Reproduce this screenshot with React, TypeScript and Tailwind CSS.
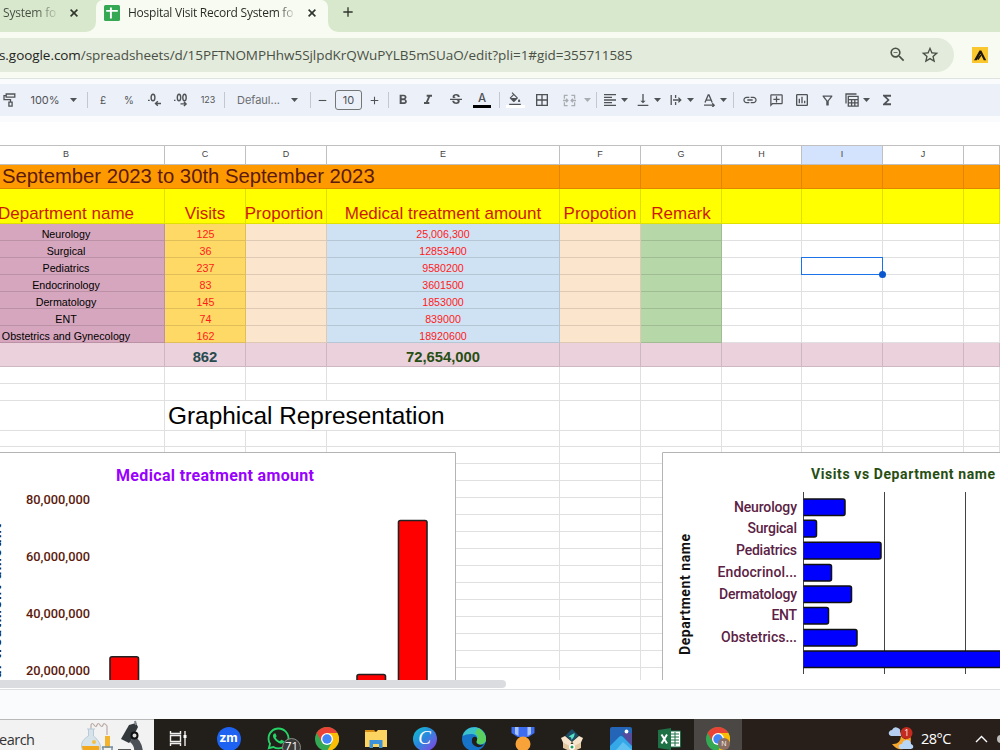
import type { ReactNode } from 'react';
import clsx from 'clsx';
import { FaWhatsapp } from 'react-icons/fa';
import {
  MdAdd,
  MdBorderAll,
  MdFormatAlignLeft,
  MdFormatBold,
  MdFormatColorFill,
  MdFormatItalic,
  MdFunctions,
  MdInsertLink,
  MdOutlineAddComment,
  MdOutlineFilterAlt,
  MdOutlineInsertChart,
  MdRemove,
  MdStarOutline,
  MdStrikethroughS,
  MdVerticalAlignBottom,
  MdZoomOut,
} from 'react-icons/md';

const departments = [
  { name: 'Neurology', visits: '125', amount: '25,006,300' },
  { name: 'Surgical', visits: '36', amount: '12853400' },
  { name: 'Pediatrics', visits: '237', amount: '9580200' },
  { name: 'Endocrinology', visits: '83', amount: '3601500' },
  { name: 'Dermatology', visits: '145', amount: '1853000' },
  { name: 'ENT', visits: '74', amount: '839000' },
  { name: 'Obstetrics and Gynecology', visits: '162', amount: '18920600' },
];

const columns = ['B', 'C', 'D', 'E', 'F', 'G', 'H', 'I', 'J', ''];

const visitBars = [
  { label: 'Neurology', x: 734, y: 499, end: 845 },
  { label: 'Surgical', x: 747.5, y: 520.3, end: 816.5 },
  { label: 'Pediatrics', x: 736, y: 542.3, end: 881 },
  { label: 'Endocrinol...', x: 717.5, y: 564.4, end: 831.5 },
  { label: 'Dermatology', x: 719, y: 586, end: 851.5 },
  { label: 'ENT', x: 771.5, y: 607.5, end: 828.5 },
  { label: 'Obstetrics...', x: 721, y: 629.5, end: 857 },
  { label: '', x: 0, y: 651, end: 1040 },
];

/* ---------- browser ---------- */

function CloseIcon({ className }: { className: string }) {
  return (
    <svg width="8" height="8" viewBox="0 0 8 8" className={clsx('shrink-0', className)} stroke="currentColor" strokeWidth="1.6">
      <path d="m.6.6 6.8 6.8M7.400.6.6 7.400" />
    </svg>
  );
}

function TabStrip() {
  return (
    <div className="flex h-8 bg-[#f8fbf2] text-[12px] text-[#30352d]">
      <div className="flex w-24 items-center rounded-br-[10px] bg-[#d8e8cd] pb-[7px] pl-[3px]">
        <span className="w-[54px] overflow-hidden whitespace-nowrap bg-linear-to-r from-[#454b40] from-60% to-[#c4d2bb] bg-clip-text tracking-[-0.2px] text-transparent">
          System fo
        </span>
        <CloseIcon className="ml-[13px]" />
      </div>
      <div className="w-[232px] bg-[#d8e8cd]">
        <div className="flex h-8 items-center rounded-t-[7px] bg-[#f8fbf2] pb-[7px] pl-2">
          <svg width="16" height="16" viewBox="0 0 16 16" className="shrink-0">
            <rect width="16" height="16" rx="1.5" fill="#34a853" />
            <path d="M2.2 5.9h11.6M6.9 2.6v10.8" stroke="#fff" strokeWidth="1.9" />
          </svg>
          <span className="ml-2 w-[166px] overflow-hidden whitespace-nowrap bg-linear-to-r from-[#252a22] from-90% to-[#dce0d6] bg-clip-text tracking-[-0.25px] text-transparent">
            Hospital Visit Record System fo
          </span>
          <CloseIcon className="ml-[14px]" />
        </div>
      </div>
      <div className="flex-1 rounded-bl-[10px] bg-[#d8e8cd] pt-1 pl-3">
        <MdAdd size={16} />
      </div>
    </div>
  );
}

function AddressBar() {
  return (
    <div className="flex h-[47px] items-center border-b border-[#dfe3e0] bg-[#f8fbf2] pt-px pb-[2px]">
      <div className="flex h-[34px] w-[954px] items-center rounded-r-full bg-[#e3ebdc] text-[#4a5046]">
        <span className="-ml-px w-[889px] whitespace-nowrap pt-px text-[13.5px] tracking-[-0.06px]">
          <span className="text-[#1f241c]">s.google.com</span>
          /spreadsheets/d/15PFTNOMPHhw5SjlpdKrQWuPYLB5mSUaO/edit?pli=1#gid=355711585
        </span>
        <MdZoomOut size={19} />
        <MdStarOutline size={20} className="ml-[13px]" />
      </div>
      <svg width="16" height="16" viewBox="0 0 16 16" className="ml-[18px]">
        <rect width="16" height="16" fill="#fbc72f" />
        <path d="M2 13.3 7.5 3.5h1.8l4.9 9.8h-2.4L8.5 6.8l-3.7 6.500z" fill="#1c1608" />
        <path d="m5.8 12.5 3.2-4.5" stroke="#1c1608" strokeWidth="1.5" />
      </svg>
    </div>
  );
}

/* ---------- sheet toolbar ---------- */

function Slot({ className, children }: { className: string; children?: ReactNode }) {
  return <div className={clsx('flex h-5 shrink-0 items-center justify-center whitespace-nowrap', className)}>{children}</div>;
}

function Caret({ className = 'w-[9px]' }: { className?: string }) {
  return (
    <Slot className={className}>
      <svg width="7" height="4" viewBox="0 0 7 4" className="shrink-0 fill-current">
        <path d="M0 0h7L3.5 4z" />
      </svg>
    </Slot>
  );
}

function Divider({ className = 'w-2' }: { className?: string }) {
  return (
    <Slot className={className}>
      <div className="h-4 w-px bg-[#c3c8d0]" />
    </Slot>
  );
}

function Toolbar() {
  return (
    <div className="bg-[#f9fbfd] pt-[5px] pb-[6px]">
      <div className="flex h-8 items-center bg-[#ecf0f9] font-['Inter',sans-serif] text-[11px] text-[#505356]">
        <Slot className="w-[18px]">
          <svg width="13" height="14" viewBox="0 0 13 14" fill="none" stroke="currentColor" strokeWidth="1.3">
            <path d="M3.2 1h8.6v3.2H3.2zM3.2 2.6H1v4h6.500v2.6M5.9 9.2h3.2v4H5.9z" />
          </svg>
        </Slot>
        <Slot className="ml-[6px] w-[42px]">100%</Slot>
        <Caret className="w-[14px]" />
        <Divider className="w-[14px]" />
        <Slot className="w-[18px] text-[10px]">£</Slot>
        <Slot className="w-[34px] text-[10px]">%</Slot>
        <Slot className="w-[18px]">
          <svg width="16" height="14" viewBox="0 0 16 14" fill="none" stroke="currentColor" strokeWidth="1.4">
            <ellipse cx="6" cy="4.5" rx="1.9" ry="3.3" />
            <path d="M1 7.4h1.7M14 10.5H8.5m2.3-2.2-2.3 2.2 2.3 2.2" />
          </svg>
        </Slot>
        <Slot className="w-[34px]">
          <svg width="16" height="14" viewBox="0 0 16 14" fill="none" stroke="currentColor" strokeWidth="1.4">
            <ellipse cx="6" cy="4.5" rx="1.7" ry="3.3" />
            <ellipse cx="11.5" cy="4.5" rx="1.7" ry="3.3" />
            <path d="M1 7.4h1.5M7.5 10.9h5.6m-2.2-2.1 2.2 2.1-2.2 2.1" />
          </svg>
        </Slot>
        <Slot className="w-5 text-[9px]">123</Slot>
        <Divider className="w-3" />
        <Slot className="w-[57px] text-[#6a6d70]">Defaul...</Slot>
        <Caret className="w-[14px]" />
        <Divider className="ml-[5px] w-2" />
        <Slot className="w-4"><MdRemove size={13} /></Slot>
        <Slot className="ml-[5px] w-[27px] rounded-[3px] border border-[#747775]">10</Slot>
        <Slot className="ml-1 w-4"><MdAdd size={13} /></Slot>
        <Divider className="ml-[2px] w-2" />
        <Slot className="w-[22px]"><MdFormatBold size={16} /></Slot>
        <Slot className="w-7"><MdFormatItalic size={16} /></Slot>
        <Slot className="w-[27px]"><MdStrikethroughS size={16} /></Slot>
        <Slot className="w-[26px] flex-col">
          <span className="text-[11.5px] leading-[13px] font-medium">A</span>
          <div className="h-[3px] w-[18px] shrink-0 bg-black" />
        </Slot>
        <Divider />
        <Slot className="w-6 flex-col pb-px">
          <MdFormatColorFill size={14} viewBox="0 0 24 20" className="shrink-0" />
          <div className="h-[3px] w-[19px] shrink-0 bg-white" />
        </Slot>
        <Slot className="w-[30px]"><MdBorderAll size={16} /></Slot>
        <Slot className="w-6 text-[#a9acb1]">
          <svg width="13" height="13" viewBox="0 0 14 14" fill="none" stroke="currentColor" strokeWidth="1.4">
            <path d="M5 1.5H1.5V5M9 1.5h3.5V5M5 12.5H1.5V9M9 12.5h3.5V9M0 7h5M3.4 5.2 5.2 7 3.4 8.8M14 7H9m1.6-1.8L8.8 7l1.8 1.8" />
          </svg>
        </Slot>
        <Caret className="w-3 text-[#a9acb1]" />
        <Divider className="w-[6px]" />
        <Slot className="ml-px w-5"><MdFormatAlignLeft size={16} /></Slot>
        <Caret />
        <Slot className="ml-1 w-5"><MdVerticalAlignBottom size={16} /></Slot>
        <Caret />
        <Slot className="ml-1 w-5">
          <svg width="12" height="12" viewBox="0 0 12 12" fill="none" stroke="currentColor" strokeWidth="1.3">
            <path d="M1.2 1v10M5.6 1v3M5.6 8v3M3 6h7.5M8.4 3.6 10.8 6 8.4 8.4" />
          </svg>
        </Slot>
        <Caret />
        <Slot className="ml-1 w-5">
          <svg width="13" height="13" viewBox="0 0 13 13" fill="none" stroke="currentColor" strokeWidth="1.3">
            <path d="M2 8.6 5.2 1h.8l3.2 7.6M3.2 6.2H8M1 11.2h10M9.2 9.2l2 2-2 2" />
          </svg>
        </Slot>
        <Caret />
        <Divider className="w-[10px]" />
        <Slot className="w-6"><MdInsertLink size={16} /></Slot>
        <Slot className="w-7"><MdOutlineAddComment size={15} className="-scale-x-100" /></Slot>
        <Slot className="w-6"><MdOutlineInsertChart size={16} /></Slot>
        <Slot className="w-[27px]"><MdOutlineFilterAlt size={15} /></Slot>
        <Slot className="w-[21px]">
          <svg width="14" height="14" viewBox="0 0 14 14" fill="none" stroke="currentColor" strokeWidth="1.3">
            <path d="M1 10.5V1h10.5M3.3 3.4h9.8v9.7H3.3zM3.3 6.6h9.8M3.3 9.8h9.8M6.6 6.6v6.5M9.8 6.6v6.5" />
          </svg>
        </Slot>
        <Caret className="w-2" />
        <Slot className="ml-1 w-[26px]"><MdFunctions size={16} /></Slot>
      </div>
    </div>
  );
}

/* ---------- sheet ---------- */

type RowProps = { height: string; fills?: string[]; open?: number[]; line?: string; cells?: ReactNode[]; text?: string };

// `open` lists the cells that lose their right edge because text runs across it
function Row({ height, fills = [], open = [], line = 'border-black/12', cells = [], text = '' }: RowProps) {
  return (
    <div className={clsx('-ml-8 grid w-[1032px] grid-cols-[197px_81px_81px_233px_81px_81px_80px_81px_81px_36px]', height, text)}>
      {columns.map((c, i) => (
        <div
          key={c}
          className={clsx(
            'relative flex min-w-0 items-end justify-center border-b whitespace-nowrap',
            line,
            !open.includes(i) && 'border-r',
            fills[i],
          )}
        >
          {cells[i]}
        </div>
      ))}
    </div>
  );
}

const orange = Array(10).fill('bg-[#ff9900]');
const yellow = Array(10).fill('bg-[#ffff00]');
const pink = Array(10).fill('bg-[#ead1dc]');
const dataFills = ['bg-[#d5a6bd]', 'bg-[#ffd966]', 'bg-[#fce5cd]', 'bg-[#cfe2f3]', 'bg-[#fce5cd]', 'bg-[#b6d7a8]'];

function Selection() {
  return (
    <div className="absolute -top-px -right-px -bottom-px -left-px z-10 border border-[#1a73e8]">
      <div className="absolute -right-[4px] -bottom-[4px] size-[7px] rounded-full bg-[#0b57d0]" />
    </div>
  );
}

function AmountChart() {
  return (
    <svg width="456" height="229" viewBox="0 452 456 229" className="absolute top-[306px] left-0 font-['Roboto',sans-serif]">
      <path d="M-1 452.5H455.5V690" fill="#fff" stroke="#b4b4b4" />
      <path d="M0 453h455v240H0z" fill="#fff" />
      <text x="116" y="481" fontSize="16" fontWeight="700" fill="#9900ff" textLength="198">Medical treatment amount</text>
      {['80,000,000', '60,000,000', '40,000,000', '20,000,000'].map((label, i) => (
        <text key={label} x="26" y={504 + i * 57.1} fontSize="13.5" fontWeight="500" fill="#5b1a0c" textLength="64" lengthAdjust="spacingAndGlyphs">{label}</text>
      ))}
      <text transform="translate(1.3 724) rotate(-90)" fontSize="14" fontWeight="700" fill="#222" textLength="200">Medical treatment amount</text>
      {[[110, 656.8], [357, 674.5], [398.5, 520.5]].map(([x, y]) => (
        <rect key={x} x={x} y={y} width="28.5" height="190" rx="2" fill="#ff0000" stroke="#222" strokeWidth="1.6" />
      ))}
    </svg>
  );
}

function VisitsChart() {
  return (
    <svg width="338" height="229" viewBox="662 452 338 229" className="absolute top-[306px] left-[662px] font-['Roboto',sans-serif]">
      <path d="M662.5 690V452.5H1010V690" fill="#fff" stroke="#b4b4b4" />
      <text x="811" y="479" fontSize="14" fontWeight="700" fill="#274e13" textLength="184">Visits vs Department name</text>
      <text transform="translate(689.5 655) rotate(-90)" fontSize="14" fontWeight="700" fill="#111" textLength="121">Department name</text>
      <path d="M803.5 492v182M884.5 492v182M965.5 492v182" stroke="#444" />
      {visitBars.map((bar) => (
        <g key={bar.y}>
          {bar.label && (
            <text x={bar.x} y={bar.y + 12.6} fontSize="14" fontWeight="500" fill="#5b2245" textLength={797 - bar.x}>{bar.label}</text>
          )}
          <path
            d={`M803.5 ${bar.y}H${bar.end - 2}q2 0 2 2v12.6q0 2 -2 2H803.5`}
            fill="#0000ff"
            stroke="#111"
            strokeWidth="1.5"
          />
        </g>
      ))}
    </svg>
  );
}

function Sheet() {
  return (
    <div className="relative mt-[23px] h-[535px] overflow-hidden border-t border-[#c0c0c0] bg-white font-['Liberation_Sans',Arial,sans-serif]">
      <Row
        height="h-[19px]"
        line="border-[#c0c0c0]"
        text="text-[9px] text-[#444]"
        fills={['', '', '', '', '', '', '', 'bg-[#d3e3fd]']}
        cells={columns.map((c) => <span key={c} className="self-center">{c}</span>)}
      />
      <Row
        height="h-6"
        fills={orange}
        open={[0, 1, 2]}
        cells={[<span key="t" className="absolute top-0 left-[34px] z-10 text-[20.25px] leading-[23px] text-[#5b1a0c]">September 2023 to 30th September 2023</span>]}
      />
      <Row
        height="h-[35px]"
        fills={yellow}
        text="text-[17px] leading-[18px] text-[#cc1a00]"
        cells={['Department name', 'Visits', <span key="p" className="mr-1">Proportion</span>, 'Medical treatment amount', 'Propotion', 'Remark']}
      />
      {departments.map((d, i) => (
        <Row
          key={d.name}
          height="h-[17px]"
          fills={dataFills}
          text="text-[10.7px] leading-[11px] text-[#ff1a1a]"
          cells={[
            <span key="n" className="text-black">{d.name}</span>,
            <span key="v" className="pl-px">{d.visits}</span>,
            '',
            d.amount,
            '',
            '',
            '',
            i === 2 && <Selection />,
          ]}
        />
      ))}
      <Row
        height="h-6"
        fills={pink}
        text="text-[14.8px] leading-[17px] font-bold"
        cells={['', <span key="v" className="text-[#274b4e]">862</span>, '', <span key="a" className="text-[#274e13]">72,654,000</span>]}
      />
      <Row height="h-[17px]" />
      <Row height="h-[17px]" />
      <Row
        height="h-[30px]"
        open={[1, 2]}
        cells={['', <span key="g" className="absolute bottom-0 left-[3px] z-10 text-[24.4px] leading-[28px] text-black">Graphical Representation</span>]}
      />
      <Row height="h-4" />
      {Array.from({ length: 14 }, (_, i) => <Row key={i} height="h-[17px]" />)}
      <AmountChart />
      <VisitsChart />
    </div>
  );
}

/* ---------- taskbar ---------- */

function ChromeIcon() {
  return (
    <svg width="24" height="24" viewBox="0 0 24 24">
      <circle cx="12" cy="12" r="12" fill="#34a853" />
      <path d="M1.6 6A12 12 0 0 1 22.4 6H12L7 15z" fill="#ea4335" />
      <path d="M22.4 6A12 12 0 0 1 12 24l5.2-9L12 6z" fill="#fbbc05" />
      <circle cx="12" cy="12" r="6" fill="#fff" />
      <circle cx="12" cy="12" r="4.7" fill="#4285f4" />
    </svg>
  );
}

function SearchArt() {
  return (
    <svg width="64" height="31" viewBox="81 719 64 31">
      <path d="M91 728v-4q1-3 3 0t3 0 3 0 3 0 4 1v9" fill="none" stroke="#bba9a7" strokeWidth="1.2" />
      <path d="M87 728h8M88.5 728v7c-5 3-7 6-7 10q0 4 3 6h15q3-4 0-9-2-4-6-7v-7" fill="#d7e3eb" stroke="#b8cbd8" />
      <path d="M82 745h17q1 3-1 6H84q-2-3-2-6z" fill="#f2a81d" />
      <circle cx="94" cy="741" r="2" fill="#f4c044" />
      <path d="M105 735h5v12h-5z" fill="#f2b42c" />
      <path d="M102 746h11M103 746v5M112 746v5" stroke="#6f8ba0" strokeWidth="1.4" />
      <path d="m129 724 7-2 2 4-7 14-2 2-8-4z" fill="#33383d" />
      <path d="m135 720 1 4" stroke="#7c8790" strokeWidth="2" />
      <path d="M134 735q8 4 9 16h-9q1-6-4-10z" fill="#4b5157" />
      <circle cx="134.5" cy="734.5" r="3" fill="#ddd" stroke="#111" strokeWidth="2" />
      <path d="M118 749h13" stroke="#555" strokeWidth="2" />
    </svg>
  );
}

function TaskSlot({ className = 'w-[49px]', children }: { className?: string; children: ReactNode }) {
  return <div className={clsx('flex h-[39px] shrink-0 items-center justify-center', className)}>{children}</div>;
}

function Taskbar() {
  return (
    <div className="flex h-[31px] overflow-hidden bg-[#221f1b] text-white">
      <div className="flex w-[154px] shrink-0 border-t border-[#b9b9b9] bg-[#f2f2f2]">
        <span className="-ml-px w-[82px] pt-[10px] text-[14.5px] leading-5 tracking-[-0.5px] text-[#333]">earch</span>
        <SearchArt />
      </div>
      <TaskSlot className="w-12">
        <svg width="18" height="17" viewBox="0 0 18 17" fill="none" stroke="#eee" strokeWidth="1.4">
          <path d="M1.5 1v2.5h10V1M1.5 5.5h10v6h-10zM1.5 16v-2.5h10V16M16 1v15" />
          <path d="M14.5 5h3v3h-3z" fill="#fff" stroke="none" />
        </svg>
      </TaskSlot>
      <TaskSlot className="w-[53px]">
        <div className="flex size-6 items-center justify-center rounded-full bg-[#1d62f0] pb-px font-['Inter',sans-serif] text-[12.5px] leading-none font-bold">zm</div>
      </TaskSlot>
      <TaskSlot className="relative w-[47px]">
        <FaWhatsapp size={25} className="text-[#25d366]" />
        <div className="absolute top-[19px] left-[27px] flex size-[19px] justify-center rounded-full border border-[#8a8a8a] bg-[#3a3a38] text-[11.5px] leading-[13px]">71</div>
      </TaskSlot>
      <TaskSlot><ChromeIcon /></TaskSlot>
      <TaskSlot>
        <svg width="22" height="19" viewBox="0 0 22 19">
          <path d="M0 1h9l2 2H0z" fill="#d99012" />
          <path d="M0 3h11l2-2h9v17H0z" fill="#fcd462" />
          <path d="M4.5 19v-8h13v8H14v-4H8v4z" fill="#3e92d9" />
        </svg>
      </TaskSlot>
      <TaskSlot>
        <div className="flex size-6 items-center justify-center rounded-full bg-linear-to-br from-[#06c3cc] via-[#2b83dd] to-[#7a2be2] pb-px font-['Liberation_Serif',serif] text-[19px] italic">C</div>
      </TaskSlot>
      <TaskSlot>
        <svg width="24" height="24" viewBox="0 0 24 24">
          <circle cx="12" cy="12" r="12" fill="#1673c8" />
          <path d="M.5 9C3 1 12-2 19 2.3q6 5 5 11.7-2 4-7 3-4-1-2-4 1-6-6-6-5 0-8.500 2z" fill="#3bc2ca" />
          <path d="M16 1q8 4 8 12-2 5-7 4-4-1-2-4 2-5-2-7z" fill="#5bd05e" />
          <path d="M10 12q1-3 4-2 2 1 1 3-2 4 3 5l4-.5q-4 4-8 2-5-2-4-7.500z" fill="#221f1b" />
        </svg>
      </TaskSlot>
      <TaskSlot>
        <svg width="24" height="24" viewBox="0 0 24 24">
          <path d="M.5 0h23v6l-6 4h-11l-6-4z" fill="#3d6cf0" />
          <path d="M4 0h3.500v9L4 7zM16.500 0H20v7l-3.500 2z" fill="#a8c4ff" />
          <circle cx="12" cy="17" r="7.5" fill="#f8a33a" />
        </svg>
      </TaskSlot>
      <TaskSlot>
        <svg width="24" height="24" viewBox="0 0 24 24">
          <path d="m3 14 9 3 9-3v7l-9 4-9-4z" fill="#e2c79f" />
          <path d="m12 2 6.500 6.500L12 15 5.500 8.500z" fill="#1d4d66" />
          <path d="M8.500 9.500 14.500 6q.5 4-3.500 7 1.500-3-2.500-3.500z" fill="#57e0c4" />
          <path d="m1 11 4-2 7 6-3 3.500-6-3zM23 11l-4-2-7 6 3 3.500 6-3z" fill="#f6e5ca" />
          <circle cx="12" cy="20" r="3" fill="#fff" />
          <circle cx="12" cy="20" r="1.5" fill="#18a058" />
        </svg>
      </TaskSlot>
      <TaskSlot>
        <svg width="22" height="23" viewBox="0 0 22 23">
          <rect width="22" height="26" rx="2" fill="#2465b8" />
          <path d="M12 6h10v16z" fill="#554c9e" />
          <path d="m0 19 9-9q2-2 4 0l9 9v6H0z" fill="#35a8e8" />
          <path d="m6 23 7-8 9 8z" fill="#8ed9fa" opacity=".5" />
          <circle cx="16.5" cy="4.5" r="1.9" fill="#fff" />
        </svg>
      </TaskSlot>
      <TaskSlot>
        <svg width="23" height="22" viewBox="0 0 23 22">
          <path d="M12 3h10.500v16H12z" fill="#fff" stroke="#1e7145" />
          <path d="M13 6h8M13 9h8M13 12h8M13 15h8M17 4v14" stroke="#1e7145" />
          <path d="m0 2 13-2v22L0 20z" fill="#1e7145" />
          <path d="m3.5 6.500 5.500 9m0-9-5.500 9" stroke="#fff" strokeWidth="2" />
        </svg>
      </TaskSlot>
      <TaskSlot className="relative w-12 bg-[#4a4745]">
        <ChromeIcon />
        <div className="absolute top-[19px] left-[24px] flex size-[12px] items-center justify-center rounded-full bg-[#8d6e63] text-[7px]">N</div>
      </TaskSlot>
      <div className="flex h-[39px] flex-1 items-center bg-[#281f1a] pl-[146px]">
        <svg width="26" height="24" viewBox="0 0 26 24" className="shrink-0">
          <path d="M13 9q5 7 9-1 3 8-4 13-8 4-14-4 8 1 9-8z" fill="#f8a72d" />
          <path d="M3 9q-3-1-2-4 1-2 3-2 2-4 6-2 3 1 2 4 2 1 1 4z" fill="#b6cff0" />
          <path d="M13 22q-3-1-2-4 1-1 3-1 1-4 5-4 4 0 4 4 3 1 2 4l-2 1z" fill="#b9d6f7" />
          <circle cx="18.5" cy="6" r="6" fill="#c42b1c" />
          <text x="16.3" y="9.3" fontSize="8.5" fill="#fff">1</text>
        </svg>
        <span className="ml-[7px] w-[54px] text-[14.5px] tracking-[-0.5px]">28°C</span>
        <svg width="13" height="8" viewBox="0 0 13 8" className="shrink-0" fill="none" stroke="#fff" strokeWidth="1.4">
          <path d="m1 7 5.500-5.500L12 7" />
        </svg>
        <div className="ml-[9px] size-2 shrink-0 rounded-full bg-[#bbb]" />
      </div>
    </div>
  );
}

export default function App() {
  return (
    <div className="flex h-[750px] w-[1000px] flex-col overflow-hidden bg-white font-['Open_Sans','Noto_Sans',sans-serif]">
      <TabStrip />
      <AddressBar />
      <Toolbar />
      <Sheet />
      <div className="h-[9px] bg-white">
        <div className="h-2 w-[506px] rounded-r-full bg-[#dadce0]" />
      </div>
      <div className="h-[30px] border-t border-[#dddfe2] bg-[#f9fbfd]" />
      <Taskbar />
    </div>
  );
}
